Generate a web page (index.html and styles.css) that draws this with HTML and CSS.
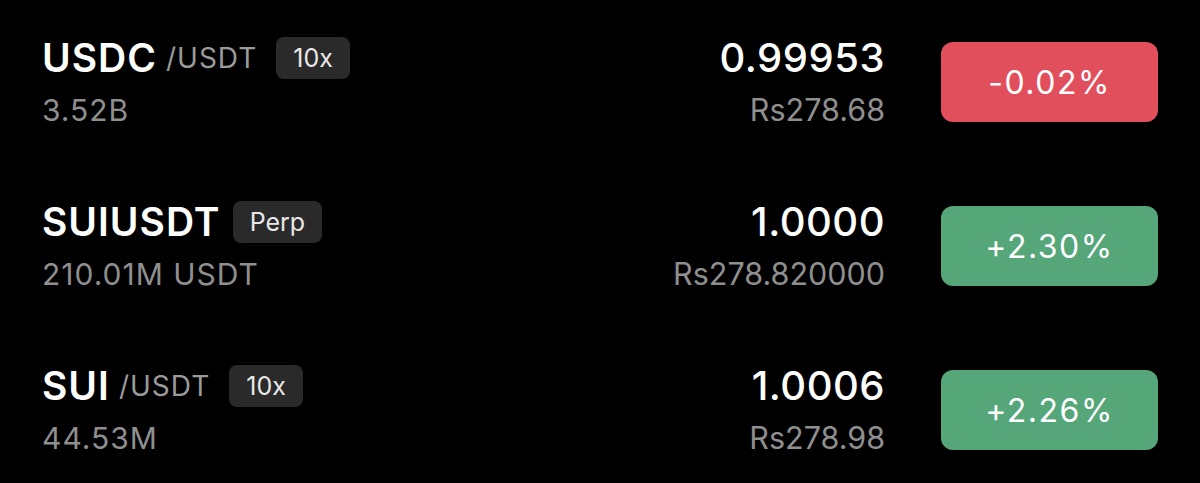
FILE: index.html
```html
<!DOCTYPE html>
<html lang="en">

<head>
    <meta charset="UTF-8">
    <meta name="viewport" content="width=device-width, initial-scale=1.0">
    <title>mercados</title>
    <link rel="stylesheet" href="styles.css">
</head>

<body>
    <div class="lista">
        <div class="fila">
            <div class="info">
                <div class="titulo">
                    <span class="par">USDC</span>
                    <span class="cotiza">/USDT</span>
                    <span class="etiqueta">10x</span>
                </div>
                <div class="volumen">3.52B</div>
            </div>
            <div class="precio">
                <div class="ultimo">0.99953</div>
                <div class="local">Rs278.68</div>
            </div>
            <div class="cambio baja">-0.02%</div>
        </div>

        <div class="fila">
            <div class="info">
                <div class="titulo">
                    <span class="par">SUIUSDT</span>
                    <span class="etiqueta">Perp</span>
                </div>
                <div class="volumen">210.01M USDT</div>
            </div>
            <div class="precio">
                <div class="ultimo">1.0000</div>
                <div class="local">Rs278.820000</div>
            </div>
            <div class="cambio sube">+2.30%</div>
        </div>

        <div class="fila">
            <div class="info">
                <div class="titulo">
                    <span class="par">SUI</span>
                    <span class="cotiza">/USDT</span>
                    <span class="etiqueta">10x</span>
                </div>
                <div class="volumen">44.53M</div>
            </div>
            <div class="precio">
                <div class="ultimo">1.0006</div>
                <div class="local">Rs278.98</div>
            </div>
            <div class="cambio sube">+2.26%</div>
        </div>
    </div>
</body>

</html>
```

FILE: styles.css
```css
body {
    margin: 0;
    background-color: #000;
    color: #fff;
    font-family: "Inter", "Noto Sans", sans-serif;
}

.lista {
    display: flex;
    flex-direction: column;
}

.fila {
    display: flex;
    align-items: center;
    height: 164px;
    padding: 0 42px;
}

.info {
    flex: 1;
}

.titulo {
    display: flex;
    align-items: center;
    height: 42px;
}

.par {
    font-size: 39px;
    font-weight: 600;
    letter-spacing: 1px;
    margin-right: 9px;
}

.cotiza {
    font-size: 28px;
    color: #9a9a9a;
    letter-spacing: 1px;
    margin-right: 16px;
}

.etiqueta {
    background-color: #2a2a2a;
    color: #e8e8e8;
    font-size: 25px;
    border-radius: 8px;
    padding: 0 17px;
    height: 42px;
    line-height: 42px;
    margin-left: 3px;
}

.volumen {
    font-size: 30px;
    color: #8f8f8f;
    letter-spacing: 1px;
    line-height: 36px;
    margin-top: 13px;
}

.precio {
    text-align: right;
    margin-right: 56px;
}

.ultimo {
    font-size: 40px;
    font-weight: 500;
    letter-spacing: 0.5px;
    line-height: 42px;
}

.local {
    font-size: 30.5px;
    color: #8f8f8f;
    line-height: 36px;
    margin-top: 13px;
}

.cambio {
    width: 217px;
    height: 80px;
    border-radius: 12px;
    display: flex;
    justify-content: center;
    align-items: center;
    font-size: 32px;
    letter-spacing: 1.5px;
    color: #fff;
}

.baja {
    background-color: #e24f5c;
}

.sube {
    background-color: #55a679;
}
```
